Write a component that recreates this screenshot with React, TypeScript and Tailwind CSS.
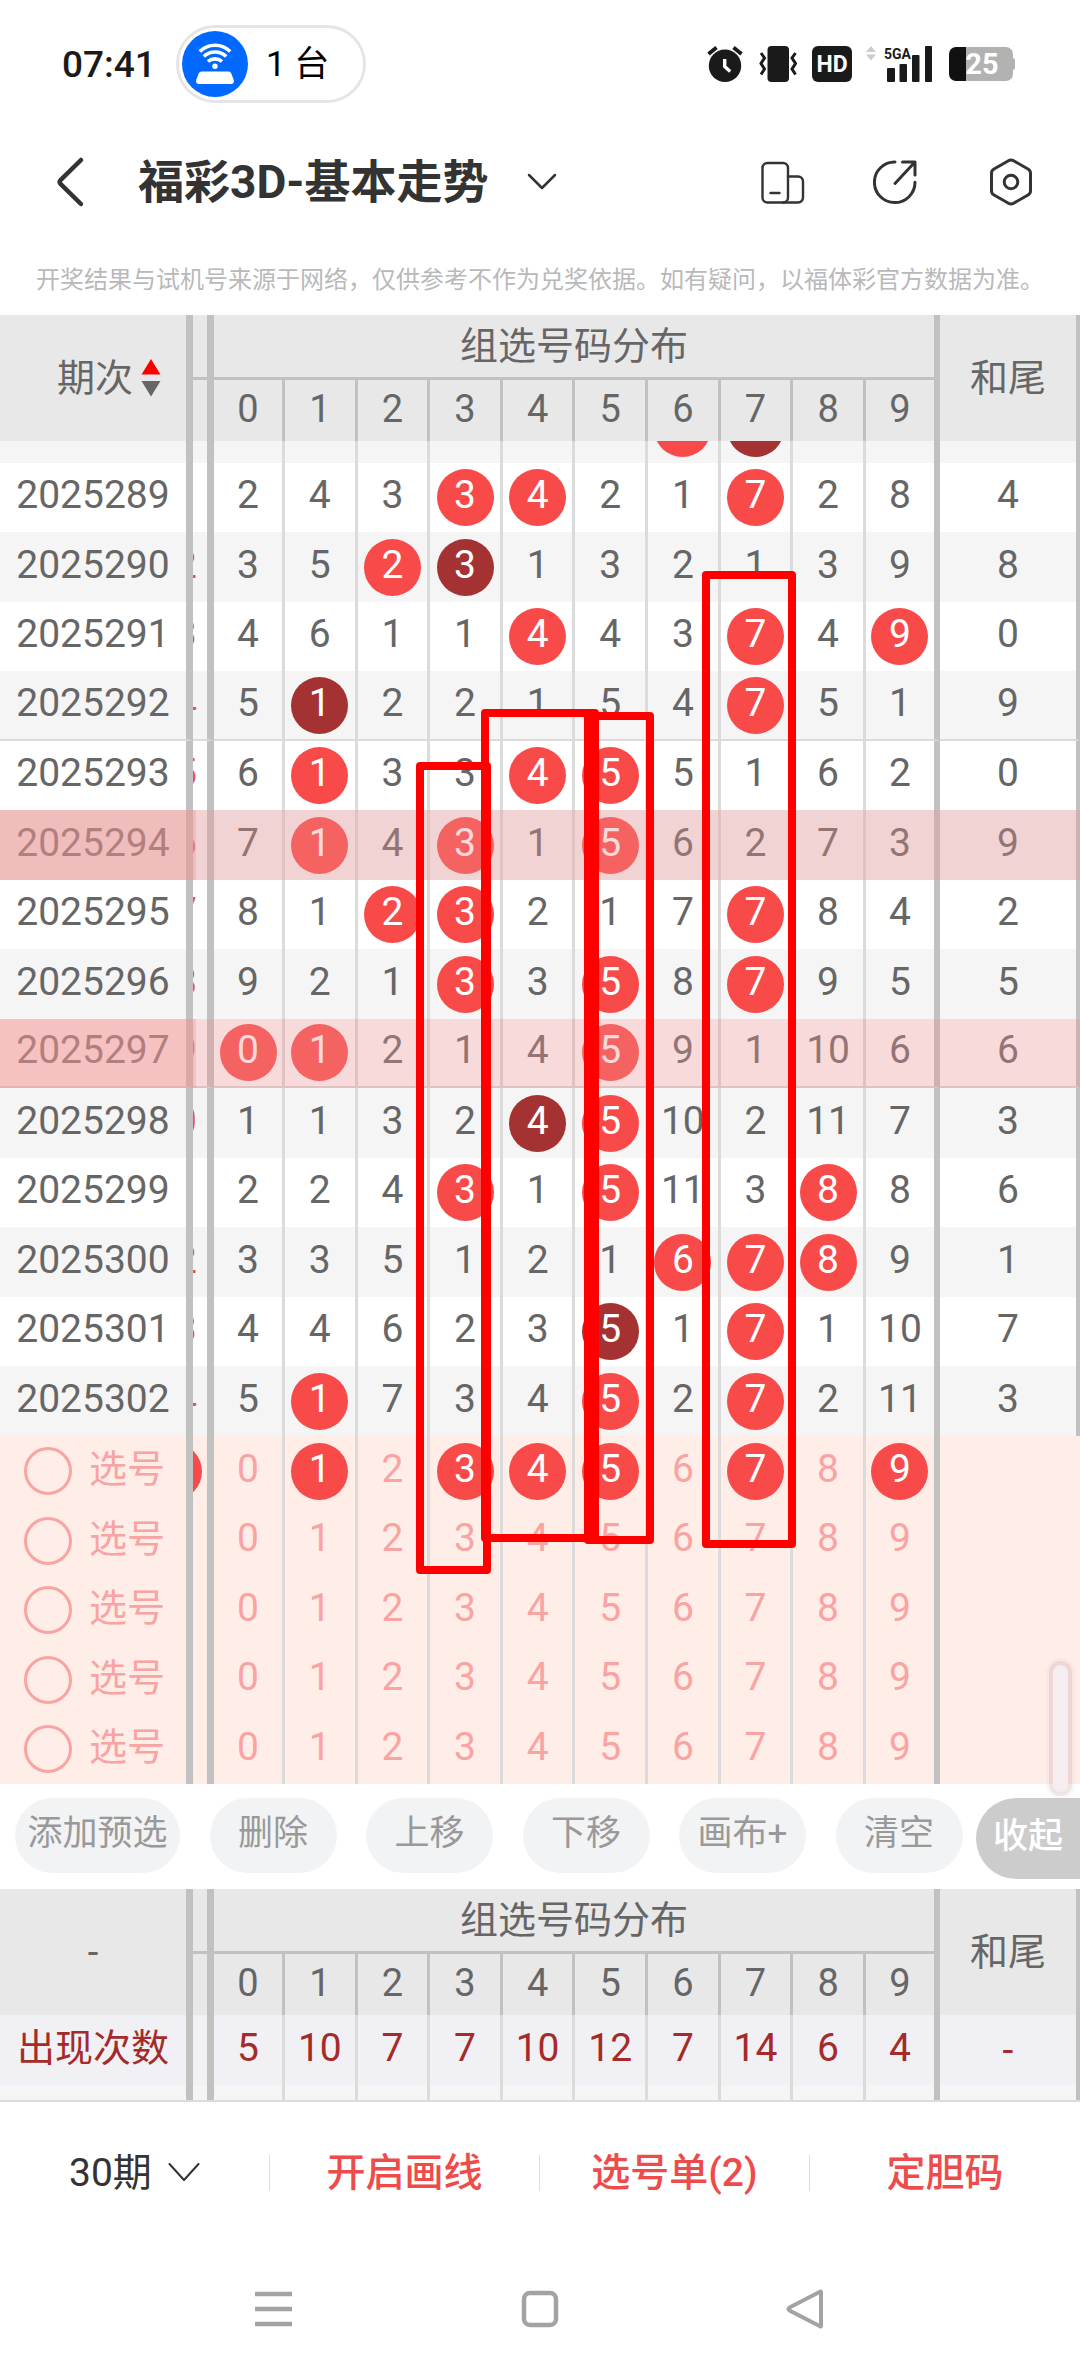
import type { ReactNode } from "react";
import clsx from "clsx";

type Draw = {
  issue: string;
  // last digit of the column that is scrolled under the issue column
  edge: string;
  // "*" marks a drawn number, "!" a number drawn twice
  cells: string[];
  tail: number;
  groupEnd?: boolean;
  marked?: boolean;
};

const draws: Draw[] = [
  { issue: "2025289", edge: "1", cells: ["2", "4", "3", "*3", "*4", "2", "1", "*7", "2", "8"], tail: 4 },
  { issue: "2025290", edge: "2", cells: ["3", "5", "*2", "!3", "1", "3", "2", "1", "3", "9"], tail: 8 },
  { issue: "2025291", edge: "3", cells: ["4", "6", "1", "1", "*4", "4", "3", "*7", "4", "*9"], tail: 0 },
  { issue: "2025292", edge: "4", cells: ["5", "!1", "2", "2", "1", "5", "4", "*7", "5", "1"], tail: 9, groupEnd: true },
  { issue: "2025293", edge: "5", cells: ["6", "*1", "3", "3", "*4", "*5", "5", "1", "6", "2"], tail: 0 },
  { issue: "2025294", edge: "6", cells: ["7", "*1", "4", "*3", "1", "*5", "6", "2", "7", "3"], tail: 9, marked: true },
  { issue: "2025295", edge: "7", cells: ["8", "1", "*2", "*3", "2", "1", "7", "*7", "8", "4"], tail: 2 },
  { issue: "2025296", edge: "8", cells: ["9", "2", "1", "*3", "3", "*5", "8", "*7", "9", "5"], tail: 5 },
  { issue: "2025297", edge: "9", cells: ["*0", "*1", "2", "1", "4", "*5", "9", "1", "10", "6"], tail: 6, groupEnd: true, marked: true },
  { issue: "2025298", edge: "0", cells: ["1", "1", "3", "2", "!4", "*5", "10", "2", "11", "7"], tail: 3 },
  { issue: "2025299", edge: "1", cells: ["2", "2", "4", "*3", "1", "*5", "11", "3", "*8", "8"], tail: 6 },
  { issue: "2025300", edge: "2", cells: ["3", "3", "5", "1", "2", "1", "*6", "*7", "*8", "9"], tail: 1 },
  { issue: "2025301", edge: "3", cells: ["4", "4", "6", "2", "3", "!5", "1", "*7", "1", "10"], tail: 7 },
  { issue: "2025302", edge: "4", cells: ["5", "*1", "7", "3", "4", "*5", "2", "*7", "2", "11"], tail: 3 },
];

const digits = [0, 1, 2, 3, 4, 5, 6, 7, 8, 9];
const picks: number[][] = [[1, 3, 4, 5, 7, 9], [], [], [], []];
const totals = [5, 10, 7, 7, 10, 12, 7, 14, 6, 4];
const tools = ["删除", "上移", "下移", "画布+", "清空"];

export default function App() {
  return (
    <div className="w-full overflow-hidden bg-white font-['Roboto','Noto_Sans_CJK_SC',sans-serif] text-[#666]">
      <StatusBar />
      <TitleBar />
      <p className="pt-[27px] pb-[22px] text-center text-2xl leading-[26px] whitespace-nowrap text-[#b9b9b9]">
        开奖结果与试机号来源于网络，仅供参考不作为兑奖依据。如有疑问，以福体彩官方数据为准。
      </p>
      <div className="relative">
        <TrendTable />
        <MarkFrames />
      </div>
      <Toolbar />
      <SummaryTable />
      <BottomBar />
      <SystemNav />
    </div>
  );
}

function StatusBar() {
  return (
    <div className="flex items-center justify-between pt-[25px] pr-[65px] pl-[62px]">
      <div className="flex items-center">
        <span className="text-[37px] leading-none font-medium text-[#1a1a1a]">07:41</span>
        <div className="ml-5 flex h-[78px] items-center gap-[18px] rounded-full border-[3px] border-[#e5e5e5] pr-[34px] pl-[3px] text-[35px] leading-none text-black">
          <HotspotIcon />
          <span>1 台</span>
        </div>
      </div>
      <div className="flex items-center text-[#1a1a1a]">
        <AlarmIcon />
        <VibrateIcon />
        <span className="ml-[15px] grid h-9 w-10 place-items-center rounded-md bg-[#1a1a1a] text-[23px] leading-none font-bold text-white">
          HD
        </span>
        <SignalIcon />
        <BatteryIcon />
      </div>
    </div>
  );
}

function TitleBar() {
  return (
    <header className="flex h-[137px] items-center pt-[21px] pr-[45px] pl-[52px] text-[#333]">
      <button type="button" aria-label="返回" className="mr-[50px]">
        <svg viewBox="0 0 36 52" className="h-[52px] w-9" fill="none" stroke="currentColor" strokeWidth={4.5} strokeLinecap="round" strokeLinejoin="round" aria-hidden>
          <path d="M29 4L8.500 24.200q-1.800 1.800 0 3.600L29 48" />
        </svg>
      </button>
      <h1 className="text-[46px] leading-none font-bold whitespace-nowrap">福彩3D-基本走势</h1>
      <button type="button" aria-label="切换走势" className="ml-[38px]">
        <svg viewBox="0 0 32 20" className="h-5 w-8" fill="none" stroke="currentColor" strokeWidth={2.5} strokeLinecap="round" strokeLinejoin="round" aria-hidden>
          <path d="M3 3l13 13L29 3" />
        </svg>
      </button>
      <div className="ml-auto flex items-center gap-[66px]">
        <button type="button" aria-label="横竖屏">
          <svg viewBox="0 0 48 48" className="size-12" fill="none" stroke="currentColor" strokeWidth={2.4} strokeLinecap="round" aria-hidden>
            <rect x="3.500" y="5" width="25.500" height="39.500" rx="5" />
            <path d="M29 18.500h10a5 5 0 015 5v16a5 5 0 01-5 5H24M11.500 35h9" />
          </svg>
        </button>
        <button type="button" aria-label="分享">
          <svg viewBox="0 0 48 48" className="size-12" fill="none" stroke="currentColor" strokeWidth={3} strokeLinecap="round" strokeLinejoin="round" aria-hidden>
            <path d="M22 4a20.300 20.300 0 1020 20.300" />
            <path d="M29.500 4h12.500v13M41.500 4.500L22 25.500" />
          </svg>
        </button>
        <button type="button" aria-label="设置">
          <svg viewBox="0 0 48 48" className="size-12" fill="none" stroke="currentColor" strokeWidth={3} strokeLinejoin="round" aria-hidden>
            <path d="M21.500 2.700q2.500-1.300 5 0l14.500 8.300q2.500 1.500 2.500 4v18q0 2.500-2.500 4l-14.500 8.300q-2.500 1.300-5 0L7 37q-2.500-1.500-2.500-4V15q0-2.500 2.500-4z" />
            <circle cx="24" cy="24" r="6.800" />
          </svg>
        </button>
      </div>
    </header>
  );
}

function Columns() {
  return (
    <colgroup>
      <col className="w-[193px]" />
      <col className="w-[21px]" />
      <col className="w-[71px]" />
      <col span={8} />
      <col className="w-[74px]" />
      <col className="w-[140px]" />
    </colgroup>
  );
}

function HeadRows({ label }: { label: ReactNode }) {
  return (
    <thead className="bg-[#e8e8e8] text-[38px] leading-none">
      <tr className="h-[65px]">
        <th rowSpan={2} className="border-r-[7px] border-[#c1c1c1] p-0 font-normal">
          {label}
        </th>
        <td className="border-r-[7px] border-b-[3px] border-[#c1c1c1] p-0" />
        <th colSpan={10} className="border-r-[6px] border-b-[3px] border-[#c1c1c1] p-0 font-normal">
          组选号码分布
        </th>
        <th rowSpan={2} className="border-r-4 border-[#c1c1c1] p-0 font-normal">
          和尾
        </th>
      </tr>
      <tr className="h-[61px]">
        <td className="border-r-[7px] border-[#c1c1c1] p-0" />
        {digits.map((d) => (
          <th key={d} className="border-r-[3px] border-[#c1c1c1] p-0 pb-1 font-normal last:border-r-[6px]">
            {d}
          </th>
        ))}
      </tr>
    </thead>
  );
}

const edgeLine = "border-r-[7px] border-r-[#c1c1c1] p-0";

function cellLine(i: number) {
  return i === 9 ? "border-r-[6px] border-r-[#c1c1c1] p-0" : "border-r-[3px] border-r-[#dbdbdb] p-0";
}

function Ball({ children, dark }: { children?: ReactNode; dark?: boolean }) {
  return (
    <span
      className={clsx(
        "mx-auto grid size-[57px] shrink-0 place-items-center rounded-full pb-1 text-white",
        dark ? "bg-[#a53232]" : "bg-[#f94a4a]",
      )}
    >
      {children}
    </span>
  );
}

function TrendTable() {
  return (
    <table className="w-full table-fixed border-separate border-spacing-0 text-center text-[39px] leading-none">
      <Columns />
      <HeadRows
        label={
          <button type="button" className="mx-auto flex items-center gap-2 pl-8">
            期次
            <svg viewBox="0 0 20 38" className="h-[38px] w-5" aria-hidden>
              <path d="M10 0l9.500 15.500H.5z" fill="#f00" />
              <path d="M10 37.500L.5 22h19z" fill="#666" />
            </svg>
          </button>
        }
      />
      <tbody>
        {/* row half hidden under the header */}
        <tr className="h-[22px] bg-[#f5f5f5]">
          <td className={edgeLine} />
          <td className={edgeLine} />
          {digits.map((d) => (
            <td key={d} className={cellLine(d)}>
              <div className="flex h-[22px] items-end overflow-hidden pb-[6px]">
                {d === 6 && <Ball />}
                {d === 7 && <Ball dark />}
              </div>
            </td>
          ))}
          <td className="border-r-4 border-[#c1c1c1] p-0" />
        </tr>
      </tbody>
      <tbody>
        {draws.map((draw) => (
          <DrawRow key={draw.issue} draw={draw} />
        ))}
      </tbody>
      <tbody>
        {picks.map((chosen, i) => (
          <PickRow key={i} id={`pick-${i}`} chosen={chosen} />
        ))}
      </tbody>
    </table>
  );
}

function DrawRow({ draw }: { draw: Draw }) {
  const line = draw.groupEnd && "border-b-2 border-b-[#dbdbdb]";
  return (
    <tr className="relative h-[70px] odd:h-[69px] even:bg-[#f5f5f5]">
      <th scope="row" className={clsx(edgeLine, line, "font-normal")}>
        <span className="block pb-1">{draw.issue}</span>
      </th>
      <td className={clsx(edgeLine, line)}>
        <div className="flex justify-end overflow-hidden pr-[10px] pb-1 text-[#f94a4a]">{draw.edge}</div>
      </td>
      {draw.cells.map((cell, i) => (
        <td key={i} className={clsx(cellLine(i), line)}>
          {cell[0] === "*" || cell[0] === "!" ? (
            <Ball dark={cell[0] === "!"}>{cell.slice(1)}</Ball>
          ) : (
            <span className="block pb-1">{cell}</span>
          )}
        </td>
      ))}
      <td className={clsx("border-r-4 border-r-[#c1c1c1] p-0", line)}>
        <span className="block pb-1">{draw.tail}</span>
        {draw.marked && (
          <>
            <span className="absolute inset-0 bg-[#ed9292]/34" />
            <span className="absolute inset-y-0 left-0 w-[196px] bg-[#ed9292]/34" />
          </>
        )}
      </td>
    </tr>
  );
}

function PickRow({ id, chosen }: { id: string; chosen: number[] }) {
  return (
    <tr className="h-[69px] bg-[#ffeee8] text-[#faa3a3] odd:h-[70px]">
      <th scope="row" className={clsx(edgeLine, "font-normal")}>
        <div className="flex items-center gap-[17px] pl-6">
          <input id={id} type="checkbox" className="size-12 appearance-none rounded-full border-[3px] border-[#faa3a3]" />
          <label htmlFor={id} className="pb-1 text-[38px]">
            选号
          </label>
        </div>
      </th>
      <td className={edgeLine}>
        {chosen.length > 0 && (
          <div className="flex justify-end overflow-hidden pr-[5px]">
            <span className="size-[57px] shrink-0 rounded-full bg-[#f94a4a]" />
          </div>
        )}
      </td>
      {digits.map((d) => (
        <td key={d} className={cellLine(d)}>
          <button type="button" aria-pressed={chosen.includes(d)} className="block w-full">
            {chosen.includes(d) ? <Ball>{d}</Ball> : <span className="block pb-1">{d}</span>}
          </button>
        </td>
      ))}
      <td className="p-0" />
    </tr>
  );
}

// Hand-drawn frames and the scroll thumb, floating over the table
function MarkFrames() {
  return (
    <div className="pointer-events-none absolute inset-0">
      <div className="absolute top-[447px] left-[416px] h-[812px] w-[75px] rounded-sm border-8 border-[#f00]" />
      <div className="absolute top-[394px] left-[481px] h-[833px] w-[118px] rounded-sm border-8 border-[#f00]" />
      <div className="absolute top-[397px] left-[584px] h-[832px] w-[70px] rounded-sm border-8 border-[#f00]" />
      <div className="absolute top-[256px] left-[702px] h-[977px] w-[94px] rounded-sm border-8 border-[#f00]" />
      <div className="absolute right-[12px] -bottom-[8px] z-10 h-[127px] w-[15px] rounded-full bg-[#f5edf0] shadow-[0_0_0_4px_rgba(150,100,110,0.12),0_0_0_7px_rgba(150,100,110,0.05)]" />
    </div>
  );
}

function Toolbar() {
  return (
    <div className="flex items-start justify-between pt-[14px] pb-[10px] pl-[15px] text-[35px] leading-none text-[#999]">
      <button type="button" className="h-[75px] w-[165px] rounded-full bg-[#f2f3f5] pb-1">
        添加预选
      </button>
      {tools.map((tool) => (
        <button key={tool} type="button" className="h-[75px] w-[127px] rounded-full bg-[#f2f3f5] pb-1">
          {tool}
        </button>
      ))}
      <button type="button" className="-ml-4 h-[81px] w-[104px] rounded-l-full bg-[#ccc] pb-1 font-medium text-white">
        收起
      </button>
    </div>
  );
}

function SummaryTable() {
  return (
    <table className="w-full table-fixed border-separate border-spacing-0 border-b-2 border-[#dbdbdb] text-center text-[39px] leading-none">
      <Columns />
      <HeadRows label="-" />
      <tbody>
        <tr className="h-[70px] bg-[#f1f0f5] text-[#a52a2a]">
          <th scope="row" className={clsx(edgeLine, "text-[38px] font-normal")}>
            <span className="block pb-1">出现次数</span>
          </th>
          <td className={edgeLine} />
          {totals.map((n, i) => (
            <td key={i} className={cellLine(i)}>
              <span className="block pb-1">{n}</span>
            </td>
          ))}
          <td className="border-r-4 border-[#c1c1c1] p-0">-</td>
        </tr>
        <tr className="h-[15px] bg-[#f5f5f5]">
          <td className={edgeLine} />
          <td className={edgeLine} />
          {digits.map((d) => (
            <td key={d} className={cellLine(d)} />
          ))}
          <td className="border-r-4 border-[#c1c1c1] p-0" />
        </tr>
      </tbody>
    </table>
  );
}

function BottomBar() {
  return (
    <div className="grid grid-cols-4 items-center divide-x divide-[#ddd] pt-[53px] text-[39px] leading-9 text-[#ee4b4b]">
      <div className="flex h-9 items-center justify-center gap-4 text-[#333]">
        <select aria-label="期数" defaultValue="30" className="h-14 appearance-none bg-transparent leading-none">
          <option value="30">30期</option>
        </select>
        <svg viewBox="0 0 32 20" className="pointer-events-none h-5 w-8" fill="none" stroke="currentColor" strokeWidth={2} strokeLinecap="round" strokeLinejoin="round" aria-hidden>
          <path d="M1.500 1L16 17 30.500 1" />
        </svg>
      </div>
      <button type="button" className="h-9 font-medium">开启画线</button>
      <button type="button" className="h-9 font-medium">选号单(2)</button>
      <button type="button" className="h-9 font-medium">定胆码</button>
    </div>
  );
}

function SystemNav() {
  return (
    <nav className="flex items-center justify-between px-[254px] pt-[98px] pb-[47px] text-[#a3a3a3]">
      <button type="button" aria-label="多任务">
        <svg viewBox="0 0 40 40" className="size-10" fill="none" stroke="currentColor" strokeWidth={4.500} aria-hidden>
          <path d="M1 5h37M1 20h37M1 35h37" />
        </svg>
      </button>
      <button type="button" aria-label="主页">
        <svg viewBox="0 0 40 40" className="size-10" fill="none" stroke="currentColor" strokeWidth={4.500} aria-hidden>
          <rect x="4" y="4" width="32" height="32" rx="6" />
        </svg>
      </button>
      <button type="button" aria-label="返回上一页">
        <svg viewBox="0 0 40 40" className="size-10" fill="none" stroke="currentColor" strokeWidth={4} strokeLinejoin="round" aria-hidden>
          <path d="M35 3v34q0 1-1 .3L3.500 21.500q-2-1.500 0-3L34 2.700q1-.7 1 .3z" />
        </svg>
      </button>
    </nav>
  );
}

function HotspotIcon() {
  return (
    <svg viewBox="0 0 66 66" className="size-[66px]" aria-hidden>
      <circle cx="33" cy="33" r="33" fill="#0169ff" />
      <g fill="none" stroke="#fff" strokeWidth="3.600">
        <path d="M17.800 20.500a21.500 21.500 0 0130.400 0" />
        <path d="M21.800 25.500a16 16 0 0122.400 0" />
        <path d="M26 30.500a10.500 10.500 0 0114 0" />
      </g>
      <circle cx="33" cy="35.300" r="2.700" fill="#fff" />
      <path d="M19.500 40.500h27q2 0 2.800 2l2.500 6.500q.7 4-3 4H17.200q-3.700 0-3-4l2.500-6.500q.8-2 2.800-2z" fill="#fff" />
    </svg>
  );
}

function AlarmIcon() {
  return (
    <svg viewBox="0 0 36 36" className="size-9" aria-hidden>
      <circle cx="18" cy="19.700" r="16.200" fill="currentColor" />
      <path d="M1.500 8l8-6.500M34.500 8l-8-6.500" stroke="currentColor" strokeWidth="3.800" fill="none" />
      <path d="M17.700 13v7.500l5.500 5" stroke="#fff" strokeWidth="3.400" fill="none" />
    </svg>
  );
}

function VibrateIcon() {
  return (
    <svg viewBox="0 0 38 36" className="ml-4 h-9 w-[38px]" aria-hidden>
      <rect x="8.500" width="21.500" height="36" rx="4" fill="currentColor" />
      <path d="M2 7l3.500 5L2 17.500 5.500 23 2 28.500M36.500 7L33 12l3.500 5.500L33 23l3.500 5.500" stroke="currentColor" strokeWidth="3" fill="none" />
    </svg>
  );
}

function SignalIcon() {
  return (
    <div className="relative ml-[14px] h-9 w-[66px]">
      <svg viewBox="0 0 66 36" className="h-9 w-[66px]" fill="currentColor" aria-hidden>
        <path d="M0 6l5-6 5 6zM0 8.500l5 6 5-6z" fill="#ccc" />
        <rect x="21" y="22" width="8" height="14" rx="1" />
        <rect x="33.500" y="18" width="7.500" height="18" rx="1" />
        <rect x="46" y="9" width="7.500" height="27" rx="1" />
        <rect x="59" width="7" height="36" rx="1" />
      </svg>
      <span className="absolute top-0 left-[18px] text-sm leading-4 font-bold">5GA</span>
    </div>
  );
}

function BatteryIcon() {
  return (
    <div className="ml-[17px] grid h-[34px] w-[66px] place-items-center">
      <svg viewBox="0 0 66 34" className="col-start-1 row-start-1 h-[34px] w-[66px]" aria-hidden>
        <path d="M7 0h50a7 7 0 017 7v4q2 0 2 3v6q0 3-2 3v4a7 7 0 01-7 7H7z" fill="#b2b2b2" />
        <path d="M7 0h10v34H7a7 7 0 01-7-7V7a7 7 0 017-7z" fill="#111" />
      </svg>
      <span className="col-start-1 row-start-1 text-[29px] leading-none font-bold text-white">25</span>
    </div>
  );
}
